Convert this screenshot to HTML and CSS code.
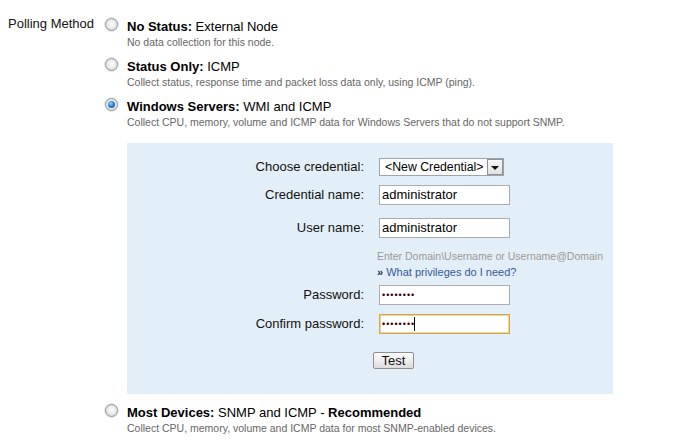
FILE: index.html
```html
<!DOCTYPE html>
<html>
<head>
<meta charset="utf-8">
<link rel="stylesheet" href="styles.css">
</head>
<body>
<div class="field">
  <div class="field-label">Polling Method</div>
  <div class="options">
    <div class="option">
      <span class="radio"></span>
      <div class="option-body">
        <div class="option-title"><b>No Status:</b> External Node</div>
        <div class="option-desc">No data collection for this node.</div>
      </div>
    </div>
    <div class="option">
      <span class="radio"></span>
      <div class="option-body">
        <div class="option-title"><b>Status Only:</b> ICMP</div>
        <div class="option-desc">Collect status, response time and packet loss data only, using ICMP (ping).</div>
      </div>
    </div>
    <div class="option">
      <span class="radio checked"></span>
      <div class="option-body">
        <div class="option-title"><b>Windows Servers:</b> WMI and ICMP</div>
        <div class="option-desc">Collect CPU, memory, volume and ICMP data for Windows Servers that do not support SNMP.</div>
      </div>
    </div>

    <div class="panel">
      <div class="prow prow-select">
        <div class="plabel">Choose credential:</div>
        <div class="select">
          <span class="select-text">&lt;New Credential&gt;</span>
          <span class="select-btn"><span class="tri"></span></span>
        </div>
      </div>
      <div class="prow prow-gap9">
        <div class="plabel">Credential name:</div>
        <div class="input">administrator</div>
      </div>
      <div class="prow prow-gap13">
        <div class="plabel">User name:</div>
        <div class="input">administrator</div>
      </div>
      <div class="hint-block">
        <div class="hint">Enter Domain\Username or Username@Domain</div>
        <div class="help"><span class="raquo">&raquo;</span> <span class="help-link">What privileges</span> <span class="help-rest">do I need?</span></div>
      </div>
      <div class="prow prow-gap6">
        <div class="plabel">Password:</div>
        <div class="input"><span class="dots">&bull;&bull;&bull;&bull;&bull;&bull;&bull;&bull;</span></div>
      </div>
      <div class="prow prow-gap9">
        <div class="plabel">Confirm password:</div>
        <div class="input focused"><span class="dots">&bull;&bull;&bull;&bull;&bull;&bull;&bull;&bull;</span><span class="caret"></span></div>
      </div>
      <div class="btn-row">
        <span class="btn">Test</span>
      </div>
    </div>

    <div class="option option-last">
      <span class="radio"></span>
      <div class="option-body">
        <div class="option-title"><b>Most Devices:</b> SNMP and ICMP - <b>Recommended</b></div>
        <div class="option-desc">Collect CPU, memory, volume and ICMP data for most SNMP-enabled devices.</div>
      </div>
    </div>
  </div>
</div>
</body>
</html>
```

FILE: styles.css
```css
html, body {
  margin: 0;
  padding: 0;
  background: #ffffff;
}
body {
  font-family: "Liberation Sans", Arial, sans-serif;
  font-size: 13px;
  color: #000;
}
.field {
  display: flex;
  padding-top: 16px;
}
.field-label {
  box-sizing: border-box;
  width: 105px;
  padding-left: 8px;
  line-height: 16px;
  color: #111;
  white-space: nowrap;
}
.options {
  display: flex;
  flex-direction: column;
  padding-top: 3px;
}
.option {
  display: flex;
  margin-bottom: 10px;
}
.option-last {
  margin-top: 11px;
}
.radio {
  box-sizing: border-box;
  flex: none;
  width: 13px;
  height: 13px;
  margin-top: -1px;
  margin-right: 9px;
  border-radius: 50%;
  border: 1px solid #8f959b;
  background: radial-gradient(circle at 50% 45%, #ffffff 0%, #eeeeee 40%, #cfd1d4 100%);
  box-shadow: 0 0 0 1px #e6e8ea;
  display: flex;
  align-items: center;
  justify-content: center;
}
.radio.checked::after {
  content: "";
  width: 7px;
  height: 7px;
  border-radius: 50%;
  background: radial-gradient(circle at 40% 35%, #9ad6ff 0%, #2c86d6 45%, #0b3f82 100%);
}
.option-title {
  line-height: 16px;
  font-size: 13px;
  white-space: nowrap;
}
.option-desc {
  font-size: 10.5px;
  line-height: 14px;
  color: #666;
  white-space: nowrap;
}
.panel {
  margin-left: 22px;
  margin-top: 4px;
  width: 486px;
  height: 251px;
  box-sizing: border-box;
  padding-top: 15px;
  background: #e3eff8;
}
.prow {
  display: flex;
  align-items: center;
}
.prow-gap9 { margin-top: 9px; }
.prow-gap13 { margin-top: 13px; }
.prow-gap6 { margin-top: 6px; }
.plabel {
  width: 237px;
  margin-right: 15px;
  text-align: right;
  color: #111;
  line-height: 16px;
  white-space: nowrap;
}
.select {
  box-sizing: border-box;
  width: 125px;
  height: 18px;
  border: 1px solid #9ea4ab;
  background: #fff;
  display: flex;
  align-items: center;
  justify-content: space-between;
  padding: 0 0 0 5px;
  white-space: nowrap;
}
.select-text {
  font-size: 12.3px;
  line-height: 16px;
  white-space: nowrap;
}
.select-btn {
  box-sizing: border-box;
  flex: none;
  width: 16px;
  height: 16px;
  border: 1px solid #8e9297;
  background: linear-gradient(#f7f7f7, #e2e2e2);
  display: flex;
  align-items: center;
  justify-content: center;
}
.tri {
  width: 0;
  height: 0;
  border-left: 4px solid transparent;
  border-right: 4px solid transparent;
  border-top: 4px solid #111;
  margin-top: 1px;
}
.input {
  box-sizing: border-box;
  width: 131px;
  height: 20px;
  border: 1px solid #a9adb2;
  background: #fff;
  padding-left: 2px;
  line-height: 18px;
  font-size: 13px;
  display: flex;
  align-items: center;
}
.input.focused {
  border-color: #d6a24c;
  box-shadow: inset 0 0 0 1px #f2d49a;
}
.dots {
  font-size: 9px;
  letter-spacing: 1px;
  color: #300;
  line-height: 18px;
}
.caret {
  display: inline-block;
  width: 1px;
  height: 14px;
  background: #000;
  margin-left: -1px;
}
.hint-block {
  margin-top: 11px;
  margin-left: 250px;
  white-space: nowrap;
}
.hint {
  font-size: 10.5px;
  line-height: 14px;
  color: #999;
}
.help {
  margin-top: 2px;
  font-size: 11px;
  line-height: 14px;
  color: #35599a;
}
.raquo {
  color: #1f2f55;
  font-weight: bold;
}
.btn-row {
  margin-top: 18px;
  padding-left: 246px;
}
.btn {
  display: inline-block;
  box-sizing: border-box;
  width: 41px;
  height: 17px;
  border: 1px solid #8f8f8f;
  border-radius: 2px;
  background: linear-gradient(#fbfbfb 0%, #efefef 50%, #dcdcdc 100%);
  text-align: center;
  line-height: 15px;
  font-size: 13px;
  color: #111;
}
```
